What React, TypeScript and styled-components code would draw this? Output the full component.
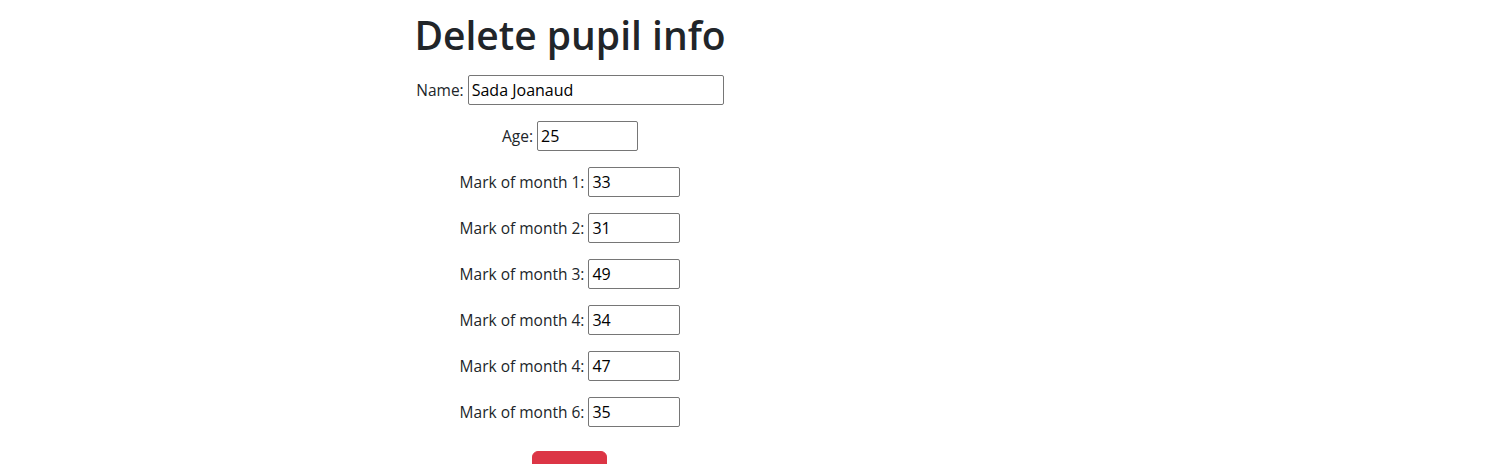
import React from 'react';
import styled, { createGlobalStyle } from 'styled-components';

const GlobalStyle = createGlobalStyle`
  body {
    margin: 0;
    background: #fff;
    font-family: "Open Sans", "Noto Sans", sans-serif;
    font-size: 16px;
    color: #212529;
  }
`;

const Page = styled.div`
  display: flex;
  justify-content: flex-start;
  padding-left: 370px;
`;

const Column = styled.div`
  width: 400px;
  display: flex;
  flex-direction: column;
  align-items: center;
`;

const Title = styled.h1`
  font-size: 39px;
  font-weight: 600;
  line-height: 48px;
  margin: 11px 0 16px;
  color: #212529;
`;

const Form = styled.form`
  display: flex;
  flex-direction: column;
  align-items: center;
`;

const Row = styled.div`
  display: flex;
  align-items: center;
  justify-content: center;
  gap: 4px;
  height: 30px;
  margin-bottom: 16px;
`;

const Label = styled.label`
  font-size: 15.5px;
  color: #212529;
`;

const Input = styled.input<{ $w: number }>`
  box-sizing: border-box;
  width: ${(p) => p.$w}px;
  height: 30px;
  padding: 1px 3px;
  font-family: inherit;
  font-size: 16px;
  color: #000;
  border: 1px solid #767676;
  border-radius: 2px;
  background: #fff;
`;

const Button = styled.button`
  margin-top: 8px;
  width: 75px;
  height: 38px;
  padding: 6px 12px;
  font-family: inherit;
  font-size: 16px;
  color: #fff;
  background-color: #dc3545;
  border: 1px solid #dc3545;
  border-radius: 6px;
  cursor: pointer;
`;

const fields = [
  { label: 'Name:', value: 'Sada Joanaud', w: 256 },
  { label: 'Age:', value: '25', w: 101 },
  { label: 'Mark of month 1:', value: '33', w: 92 },
  { label: 'Mark of month 2:', value: '31', w: 92 },
  { label: 'Mark of month 3:', value: '49', w: 92 },
  { label: 'Mark of month 4:', value: '34', w: 92 },
  { label: 'Mark of month 4:', value: '47', w: 92 },
  { label: 'Mark of month 6:', value: '35', w: 92 },
];

const App = () => {
  return (
    <>
      <GlobalStyle />
      <Page>
        <Column>
          <Title>Delete pupil info</Title>
          <Form onSubmit={(e) => e.preventDefault()}>
            {fields.map((f, i) => (
              <Row key={i}>
                <Label>{f.label}</Label>
                <Input $w={f.w} defaultValue={f.value} />
              </Row>
            ))}
            <Button type="submit">Delete</Button>
          </Form>
        </Column>
      </Page>
    </>
  );
};

export default App;
